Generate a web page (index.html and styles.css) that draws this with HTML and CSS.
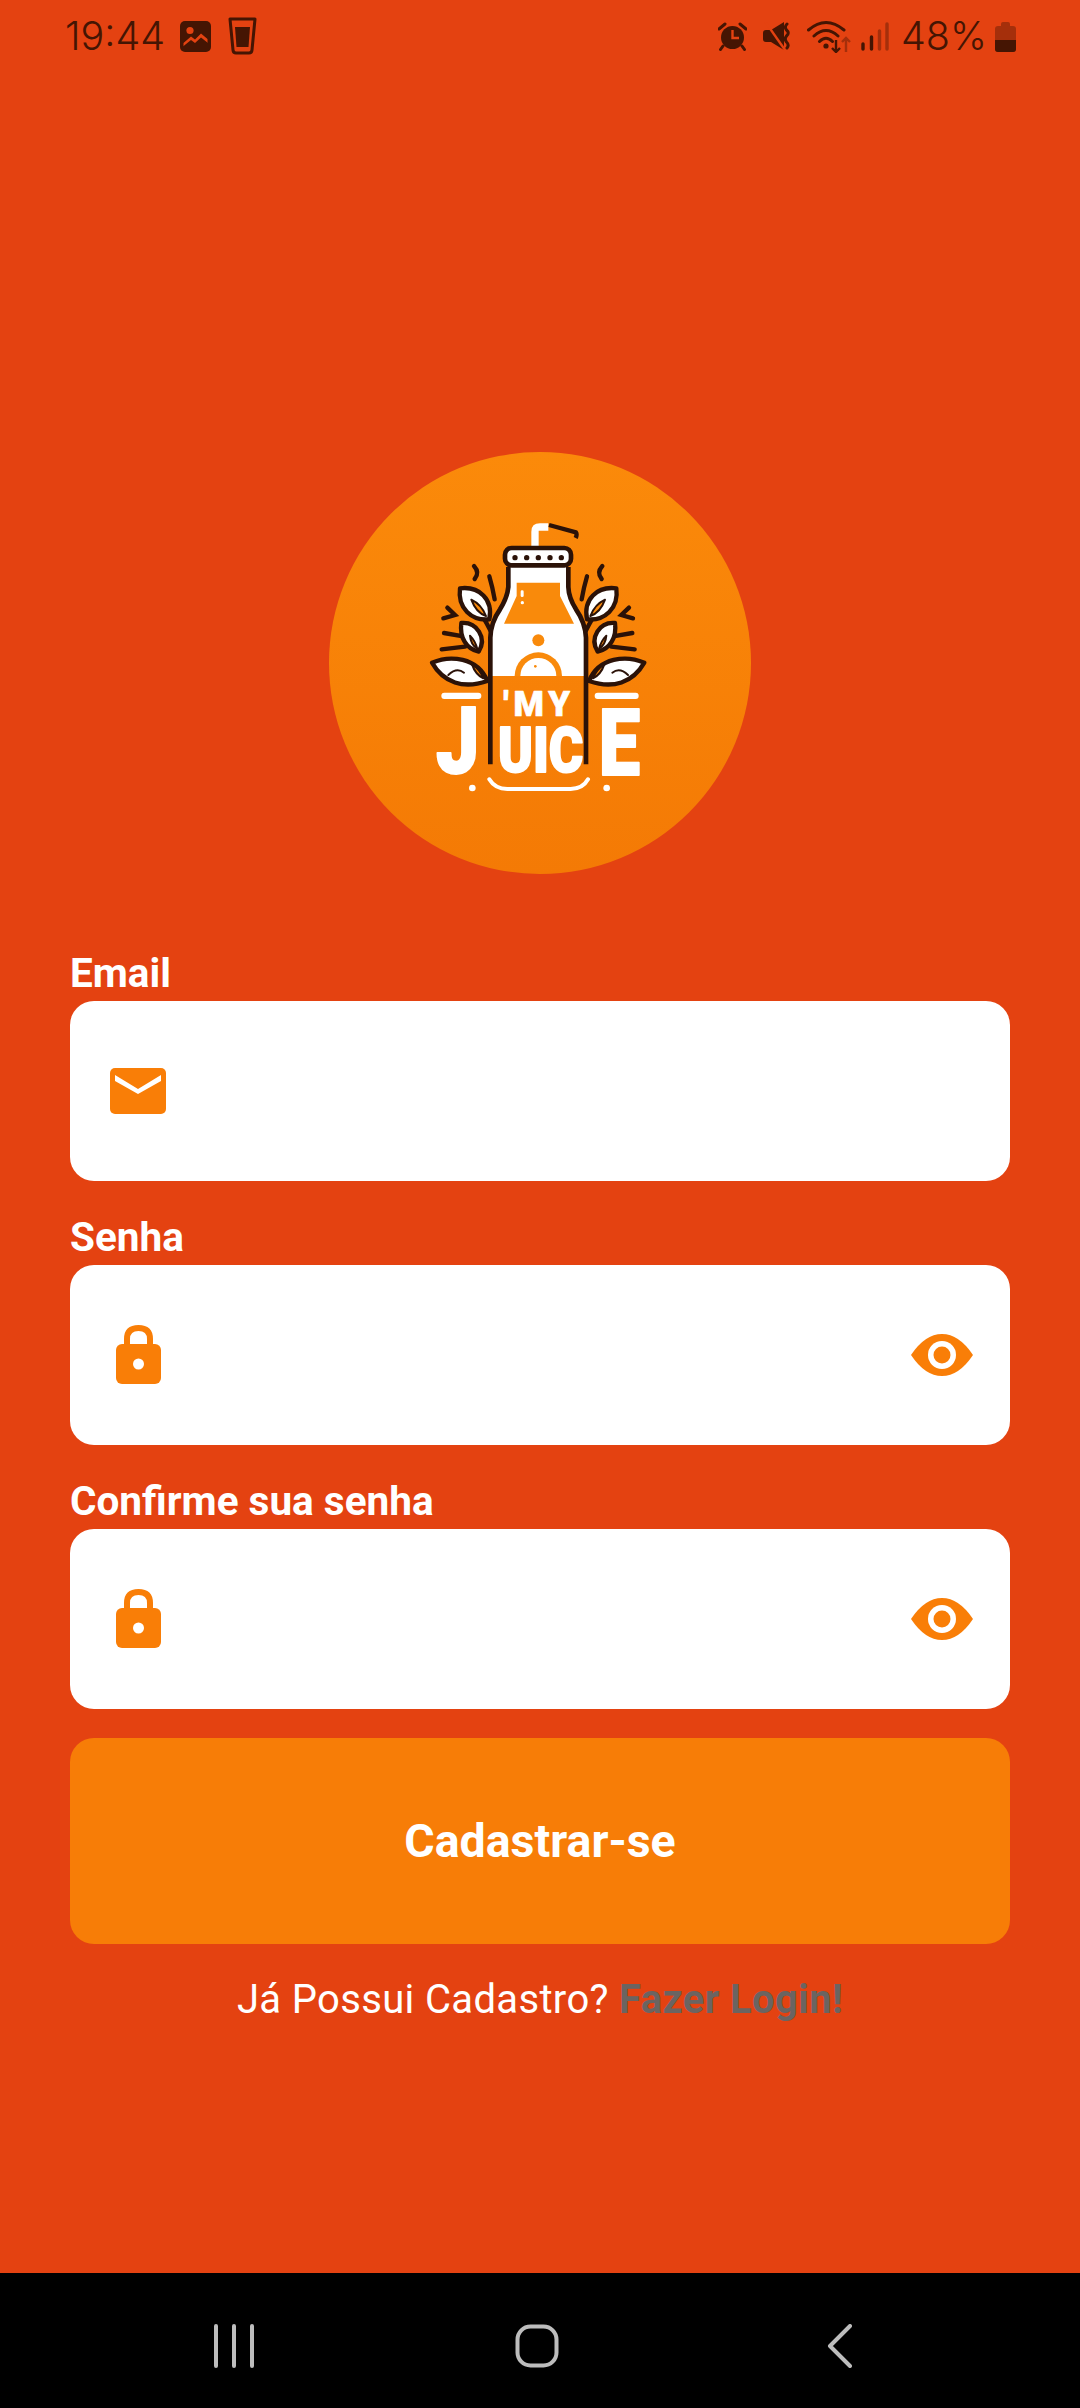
FILE: index.html
```html
<!DOCTYPE html>
<html lang="pt-BR">
<head>
    <meta charset="UTF-8">
    <meta name="viewport" content="width=device-width, initial-scale=1.0">
    <title>My Juice</title>
    <link rel="stylesheet" href="styles.css">
</head>
<body>
    <div class="screen">
        <!-- status bar -->
        <div class="status-bar">
            <div class="status-left">
                <span class="clock">19:44</span>
                <svg class="ic-image" viewBox="0 0 31 31"><rect width="31" height="31" rx="5" fill="#451503"/><circle cx="10" cy="9.5" r="3.6" fill="#e44211"/><path d="M3.5 22 L11 15.5 L15 18.5 L21 12.5 L27.5 18 V25 Q27.5 27 25.5 27 H5.5 Q3.5 27 3.5 25 Z" fill="#e44211"/><path d="M3 25.5 L11 19 L15 22 L21 16.5 L28 22 V28 H3 Z" fill="#451503"/></svg>
                <svg class="ic-cup" viewBox="0 0 29 38"><path d="M2 2 H27 L24 33 Q23.7 36 21 36 H8 Q5.3 36 5 33 Z" fill="none" stroke="#451503" stroke-width="3" stroke-linejoin="round"/><path d="M7 10 H22 L20.5 30 H8.5 Z" fill="#451503"/></svg>
            </div>
            <div class="status-right">
                <svg class="ic-alarm" viewBox="0 0 29 29"><circle cx="14.5" cy="15.5" r="11.5" fill="#451503"/><path d="M14.5 8 V16 H21" fill="none" stroke="#e44211" stroke-width="2.4"/><path d="M1 7 L7 2 M28 7 L22 2 M5 24 L2.5 27.5 M24 24 L26.5 27.5" stroke="#451503" stroke-width="3" stroke-linecap="round"/></svg>
                <svg class="ic-mute" viewBox="0 0 30 28"><path d="M0 11 Q0 8 3 8 H8 L21 0 V28 L8 20 H3 Q0 20 0 17 Z" fill="#451503"/><path d="M1 -2 L22 28" stroke="#e44211" stroke-width="2.4"/><path d="M24 2 Q21 5 23.5 8 Q27 11 23.5 14 Q21 17 23.5 20 Q26.5 23 24 26" fill="none" stroke="#451503" stroke-width="3" stroke-linecap="round"/></svg>
                <svg class="ic-wifi" viewBox="0 0 44 33"><path d="M1.5 10 Q19 -5 37 10 M7 16 Q19 5 31 16 M12.5 21.5 Q19 15 25.5 21.5" fill="none" stroke="#451503" stroke-width="3" stroke-linecap="round"/><circle cx="19" cy="26" r="2.6" fill="#451503"/><path d="M29 20 V32 M25 28 L29 32 L33 28" fill="none" stroke="#451503" stroke-width="2.4"/><path d="M39 32 V18 M35 22 L39 18 L43 22" fill="none" stroke="#451503" stroke-opacity="0.4" stroke-width="2.4"/></svg>
                <svg class="ic-signal" viewBox="0 0 28 29"><g stroke-width="3.4" stroke-linecap="round" fill="none"><path d="M2 27 V22" stroke="#451503"/><path d="M10.5 27 V15" stroke="#451503"/><path d="M18.5 27 V9" stroke="#451503" stroke-opacity="0.4"/><path d="M26 27 V2" stroke="#451503" stroke-opacity="0.4"/></g></svg>
                <span class="battery-text">48%</span>
                <svg class="ic-battery" viewBox="0 0 21 31"><path d="M6 3 Q6 1 8 1 H13 Q15 1 15 3 V5 H18 Q21 5 21 8 V28 Q21 31 18 31 H3 Q0 31 0 28 V8 Q0 5 3 5 H6 Z" fill="#451503" fill-opacity="0.4"/><path d="M0 19 H21 V28 Q21 31 18 31 H3 Q0 31 0 28 Z" fill="#451503"/></svg>
            </div>
        </div>

        <main class="content">
            <div class="logo-circle">
                <svg class="logo" viewBox="0 0 840 930">
                    <defs>
                        <g id="leaves">
                            <g fill="none" stroke="#2b1208" stroke-width="13" stroke-linecap="round">
                                <path d="M222 195 Q240 215 224 234"/>
                                <path d="M268 226 Q278 260 284 295"/>
                                <path d="M142 320 L165 342 L130 352"/>
                                <path d="M132 396 L190 406"/>
                                <path d="M125 445 L195 437"/>
                                <path d="M272 390 Q262 370 250 350"/>
                            </g>
                            <g fill="#fff" stroke="#2b1208" stroke-width="13" stroke-linejoin="round">
                                <path d="M180 262 C238 255 280 295 268 355 C215 360 172 322 180 262 Z"/>
                                <path d="M184 366 C230 362 262 410 236 452 C200 445 178 410 184 366 Z"/>
                                <path d="M96 485 C150 462 232 468 262 540 C190 565 130 545 96 485 Z"/>
                            </g>
                            <g fill="#f98a0b" stroke="#2b1208" stroke-width="6" stroke-linejoin="round">
                                <path d="M214 296 Q244 310 258 345 Q228 335 214 296 Z"/>
                                <path d="M210 404 Q226 420 232 444 Q212 430 210 404 Z"/>
                                <path d="M216 490 Q240 505 250 532 Q226 520 216 490 Z"/>
                            </g>
                            <path d="M145 522 Q170 498 192 515" fill="none" stroke="#2b1208" stroke-width="6" stroke-linecap="round"/>
                        </g>
                    </defs>

                    <path d="M405 135 V92 Q405 78 420 78 H445" fill="none" stroke="#fff" stroke-width="22"/>
                    <path d="M447 72 L528 94 Q532 100 527 111" fill="none" stroke="#2b1208" stroke-width="13" stroke-linejoin="round"/>

                    <path d="M325 198 V258 Q322 290 300 325 Q272 365 272 410 V525 H556 V410 Q556 365 528 325 Q506 290 505 258 V198 Z" fill="#fff"/>
                    <path d="M350 245 H480 V285 L522 368 H312 L350 285 Z" fill="#f98a0b"/>
                    <rect x="362" y="268" width="9" height="20" rx="4" fill="#fff"/>
                    <circle cx="367" cy="305" r="5" fill="#fff"/>
                    <circle cx="415" cy="418" r="18" fill="#f98a0b"/>
                    <path d="M344 525 A71 71 0 0 1 486 525 Z" fill="#f98a0b"/>
                    <path d="M361 525 A54 54 0 0 1 469 525 Z" fill="#fff"/>
                    <circle cx="406" cy="496" r="4" fill="#f98a0b"/>

                    <use href="#leaves"/>
                    <use href="#leaves" transform="translate(829 0) scale(-1 1)"/>

                    <rect x="124" y="575" width="120" height="19" rx="9" fill="#fff"/>
                    <rect x="584" y="575" width="132" height="19" rx="9" fill="#fff"/>

                    <text class="logo-my" x="310" y="645" textLength="200" lengthAdjust="spacing">'MY</text>
                    <text class="logo-big" x="108" y="815" textLength="130" lengthAdjust="spacingAndGlyphs">J</text>
                    <text class="logo-mid" x="294" y="812" textLength="256" lengthAdjust="spacingAndGlyphs">UIC</text>
                    <text class="logo-big" x="596" y="822" textLength="124" lengthAdjust="spacingAndGlyphs">E</text>

                    <path d="M325 198 V258 Q322 290 300 325 Q272 365 271 410 V790 M505 198 V258 Q506 290 528 325 Q556 365 558 410 V790" stroke="#2b1208" stroke-width="14" fill="none"/>

                    <rect x="315" y="141" width="198" height="52" rx="20" fill="#fff" stroke="#2b1208" stroke-width="14"/>
                    <g fill="#2b1208">
                        <circle cx="345" cy="170" r="8"/><circle cx="380" cy="170" r="8"/><circle cx="415" cy="170" r="8"/><circle cx="450" cy="170" r="8"/><circle cx="484" cy="170" r="8"/>
                    </g>

                    <path d="M268 835 Q285 864 322 864 H512 Q548 864 564 835" fill="none" stroke="#fff" stroke-width="12" stroke-linecap="round"/>
                    <circle cx="217" cy="861" r="10" fill="#fff"/>
                    <circle cx="620" cy="861" r="10" fill="#fff"/>
                </svg>
            </div>

            <form class="form">
                <label class="field-label">Email</label>
                <div class="field">
                    <span class="field-icon">
                        <svg class="ic-mail" viewBox="0 0 56 46"><rect width="56" height="46" rx="5" fill="#f97e07"/><path d="M5 7 L28 21 L51 7 V13 L28 26 L5 13 Z" fill="#fff"/></svg>
                    </span>
                </div>

                <label class="field-label">Senha</label>
                <div class="field">
                    <span class="field-icon">
                        <svg class="ic-lock" viewBox="0 0 45 60"><path d="M11 21 V15 Q11 4 22.5 4 Q34 4 34 15 V21" fill="none" stroke="#f97e07" stroke-width="6"/><rect y="20" width="45" height="40" rx="6" fill="#f97e07"/><circle cx="22.5" cy="40" r="5.5" fill="#fff"/></svg>
                    </span>
                    <svg class="ic-eye" viewBox="0 0 62 42"><path d="M0 21 Q14 0 31 0 Q48 0 62 21 Q48 42 31 42 Q14 42 0 21 Z" fill="#f97e07"/><circle cx="31" cy="21" r="14" fill="#fff"/><circle cx="31" cy="21" r="8.5" fill="#f97e07"/></svg>
                </div>

                <label class="field-label">Confirme sua senha</label>
                <div class="field">
                    <span class="field-icon">
                        <svg class="ic-lock" viewBox="0 0 45 60"><path d="M11 21 V15 Q11 4 22.5 4 Q34 4 34 15 V21" fill="none" stroke="#f97e07" stroke-width="6"/><rect y="20" width="45" height="40" rx="6" fill="#f97e07"/><circle cx="22.5" cy="40" r="5.5" fill="#fff"/></svg>
                    </span>
                    <svg class="ic-eye" viewBox="0 0 62 42"><path d="M0 21 Q14 0 31 0 Q48 0 62 21 Q48 42 31 42 Q14 42 0 21 Z" fill="#f97e07"/><circle cx="31" cy="21" r="14" fill="#fff"/><circle cx="31" cy="21" r="8.5" fill="#f97e07"/></svg>
                </div>

                <button class="submit-btn" type="button">Cadastrar-se</button>
            </form>

            <p class="login-text">Já Possui Cadastro? <a class="login-link">Fazer Login!</a></p>
        </main>

        <!-- android nav bar -->
        <nav class="nav-bar">
            <svg class="ic-recent" viewBox="0 0 42 44"><path d="M3 2 V42 M21 2 V42 M39 2 V42" stroke="#bdbdbd" stroke-width="4" stroke-linecap="round"/></svg>
            <svg class="ic-home" viewBox="0 0 44 44"><rect x="2.5" y="2.5" width="39" height="39" rx="13" fill="none" stroke="#bdbdbd" stroke-width="4"/></svg>
            <svg class="ic-back" viewBox="0 0 26 44"><path d="M23 2 L3 22 L23 42" fill="none" stroke="#bdbdbd" stroke-width="4" stroke-linecap="round" stroke-linejoin="round"/></svg>
        </nav>
    </div>
</body>
</html>
```

FILE: styles.css
```css
* {
    box-sizing: border-box;
}

body {
    margin: 0;
    font-family: Roboto, "Liberation Sans", sans-serif;
    background-color: #e44211;
}

.screen {
    display: flex;
    flex-direction: column;
    width: 1080px;
    height: 2408px;
    background-color: #e44211;
    overflow: hidden;
}

/* status bar */
.status-bar {
    display: flex;
    justify-content: space-between;
    align-items: center;
    height: 72px;
    padding: 0 64px 0 65px;
    color: #451503;
}

.status-left,
.status-right {
    display: flex;
    align-items: center;
}

.clock,
.battery-text {
    font-family: Inter, Roboto, sans-serif;
    font-size: 39.5px;
    font-weight: 300;
    line-height: 72px;
}

.ic-image {
    width: 31px;
    height: 31px;
    margin-left: 15px;
}

.ic-cup {
    width: 29px;
    height: 38px;
    margin-left: 17px;
}

.ic-alarm {
    width: 29px;
    height: 29px;
}

.ic-mute {
    width: 30px;
    height: 28px;
    margin-left: 16px;
}

.ic-wifi {
    width: 44px;
    height: 33px;
    margin-left: 14px;
}

.ic-signal {
    width: 28px;
    height: 29px;
    margin-left: 10px;
}

.battery-text {
    margin-left: 12px;
}

.ic-battery {
    width: 21px;
    height: 31px;
    margin-left: 8px;
}

/* main */
.content {
    flex: 1;
    display: flex;
    flex-direction: column;
    padding: 380px 70px 0;
}

.logo-circle {
    display: flex;
    justify-content: center;
    align-items: center;
    align-self: center;
    width: 422px;
    height: 422px;
    padding-bottom: 15px;
    border-radius: 50%;
    background: linear-gradient(180deg, #fb8a0a, #f47a05);
}

.logo {
    width: 280px;
    height: 310px;
}

.logo-my,
.logo-big,
.logo-mid {
    font-family: Roboto, sans-serif;
    font-weight: 900;
    fill: #fff;
    stroke: #fff;
    stroke-width: 6px;
    stroke-linejoin: round;
}

.logo-my {
    font-size: 104px;
    stroke-width: 2px;
}

.logo-big {
    font-size: 280px;
}

.logo-mid {
    font-size: 190px;
}

.form {
    display: flex;
    flex-direction: column;
    margin-top: 72px;
}

.field-label {
    height: 55px;
    color: #fff;
    font-size: 40.5px;
    font-weight: 700;
    line-height: 55px;
}

.field {
    display: flex;
    justify-content: space-between;
    align-items: center;
    height: 180px;
    margin-bottom: 29px;
    padding: 0 37px 0 40px;
    border-radius: 24px;
    background-color: #fff;
}

.field-icon {
    display: flex;
    justify-content: center;
    width: 56px;
}

.ic-mail {
    width: 56px;
    height: 46px;
}

.ic-lock {
    width: 45px;
    height: 60px;
    margin-bottom: 3px;
}

.ic-eye {
    width: 62px;
    height: 42px;
}

.submit-btn {
    height: 206px;
    border: none;
    border-radius: 24px;
    background-color: #f77d07;
    color: #fff;
    font-family: inherit;
    font-size: 46.5px;
    font-weight: 700;
}

.login-text {
    margin: 28px 0 0;
    color: #fff;
    font-size: 40px;
    line-height: 56px;
    text-align: center;
    letter-spacing: 0.35px;
}

.login-link {
    color: #6b6461;
    font-weight: 700;
}

/* nav bar */
.nav-bar {
    display: grid;
    grid-template-columns: repeat(3, 303px);
    justify-items: center;
    align-items: center;
    height: 135px;
    padding: 10px 0 0 82px;
    background-color: #000;
}

.ic-recent {
    width: 42px;
    height: 44px;
}

.ic-home {
    width: 44px;
    height: 44px;
}

.ic-back {
    width: 26px;
    height: 44px;
}
```
